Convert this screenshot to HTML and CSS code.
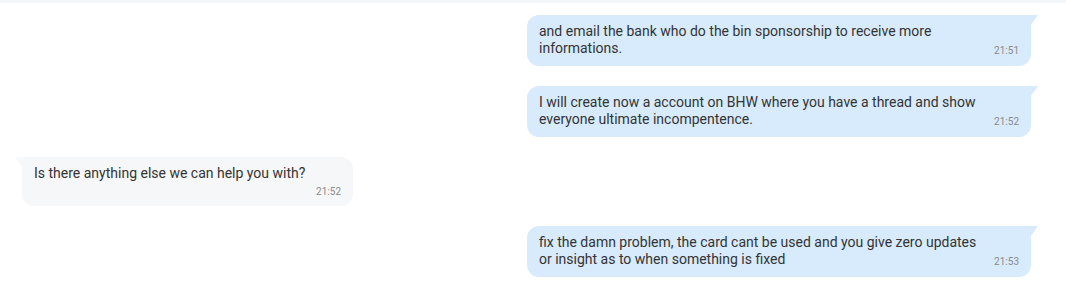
FILE: index.html
```html
<!DOCTYPE html>
<html>
<head>
<meta charset="utf-8">
<link rel="stylesheet" href="styles.css">
</head>
<body>
<div class="topbar"></div>
<div class="chat">
  <div class="row row-out">
    <div class="bubble out">
      <div class="text">and email the bank who do the bin sponsorship to receive more informations.</div>
      <span class="time">21:51</span>
    </div>
  </div>
  <div class="row row-out">
    <div class="bubble out">
      <div class="text">I will create now a account on BHW where you have a thread and show everyone ultimate incompentence.</div>
      <span class="time">21:52</span>
    </div>
  </div>
  <div class="row row-in">
    <div class="bubble in">
      <div class="text">Is there anything else we can help you with?</div>
      <div class="time-in">21:52</div>
    </div>
  </div>
  <div class="row row-out">
    <div class="bubble out">
      <div class="text">fix the damn problem, the card cant be used and you give zero updates or insight as to when something is fixed</div>
      <span class="time">21:53</span>
    </div>
  </div>
</div>
</body>
</html>
```
FILE: styles.css
```css
* { box-sizing: border-box; }
html, body {
  margin: 0;
  padding: 0;
  background: #ffffff;
  font-family: Roboto, "Liberation Sans", Arial, sans-serif;
  color: #333333;
}
.topbar {
  height: 3px;
  background: #f5f6f8;
}
.chat {
  display: flex;
  flex-direction: column;
  gap: 20px;
  padding-top: 12px;
}
.row {
  display: flex;
}
.row-out {
  justify-content: flex-end;
  padding-right: 35px;
}
.row-in {
  justify-content: flex-start;
  padding-left: 22px;
}
.bubble {
  position: relative;
  font-size: 14px;
  line-height: 17px;
  padding: 8px 12px 9px 12px;
}
.bubble.out {
  width: 504px;
  background: #d8ebfd;
  border-radius: 12px 0 12px 12px;
}
.bubble.out::after {
  content: "";
  position: absolute;
  top: 0;
  right: -7px;
  width: 0;
  height: 0;
  border-top: 10px solid #d8ebfd;
  border-right: 7px solid transparent;
}
.bubble.in {
  width: 331px;
  background: #f6f7f9;
  border-radius: 0 12px 12px 12px;
  padding-bottom: 7px;
}
.bubble.in::before {
  content: "";
  position: absolute;
  top: 0;
  left: -7px;
  width: 0;
  height: 0;
  border-top: 10px solid #f6f7f9;
  border-left: 7px solid transparent;
}
.out .text {
  max-width: 448px;
}
.time {
  position: absolute;
  right: 12px;
  bottom: 9px;
  font-size: 10px;
  line-height: 12px;
  color: #8a8a8a;
}
.time-in {
  margin-top: 3px;
  text-align: right;
  font-size: 10px;
  line-height: 14px;
  color: #8a8a8a;
}
```
